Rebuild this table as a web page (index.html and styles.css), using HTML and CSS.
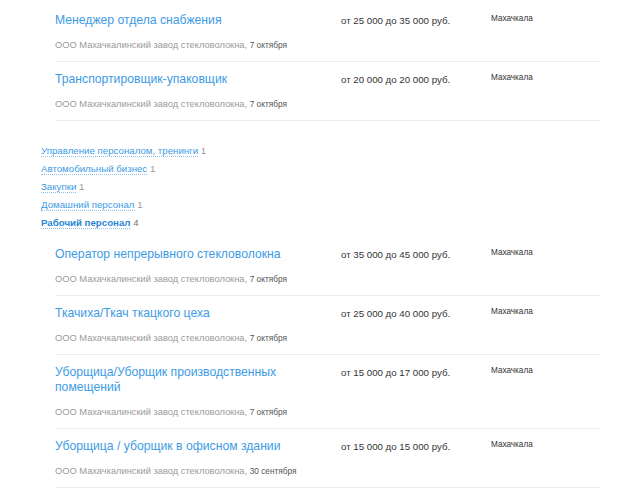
FILE: index.html
```html
<!DOCTYPE html>
<html lang="ru">
<head>
<meta charset="utf-8">
<title>Вакансии</title>
<link rel="stylesheet" href="styles.css">
</head>
<body>
<div class="page">
  <div class="list first">
    <div class="row">
      <div class="main">
        <a class="title" href="#">Менеджер отдела снабжения</a>
        <div class="company">ООО Махачкалинский завод стекловолокна, <span class="date">7 октября</span></div>
      </div>
      <div class="salary">от 25 000 до 35 000 руб.</div>
      <div class="city">Махачкала</div>
    </div>
    <div class="row">
      <div class="main">
        <a class="title" href="#">Транспортировщик-упаковщик</a>
        <div class="company">ООО Махачкалинский завод стекловолокна, <span class="date">7 октября</span></div>
      </div>
      <div class="salary">от 20 000 до 20 000 руб.</div>
      <div class="city">Махачкала</div>
    </div>
  </div>

  <ul class="cats">
    <li><a class="cat" href="#">Управление персоналом, тренинги</a> <span class="count">1</span></li>
    <li><a class="cat" href="#">Автомобильный бизнес</a> <span class="count">1</span></li>
    <li><a class="cat" href="#">Закупки</a> <span class="count">1</span></li>
    <li><a class="cat" href="#">Домашний персонал</a> <span class="count">1</span></li>
    <li><a class="cat active" href="#">Рабочий персонал</a> <span class="count">4</span></li>
  </ul>

  <div class="list">
    <div class="row">
      <div class="main">
        <a class="title" href="#">Оператор непрерывного стекловолокна</a>
        <div class="company">ООО Махачкалинский завод стекловолокна, <span class="date">7 октября</span></div>
      </div>
      <div class="salary">от 35 000 до 45 000 руб.</div>
      <div class="city">Махачкала</div>
    </div>
    <div class="row">
      <div class="main">
        <a class="title" href="#">Ткачиха/Ткач ткацкого цеха</a>
        <div class="company">ООО Махачкалинский завод стекловолокна, <span class="date">7 октября</span></div>
      </div>
      <div class="salary">от 25 000 до 40 000 руб.</div>
      <div class="city">Махачкала</div>
    </div>
    <div class="row">
      <div class="main">
        <a class="title" href="#">Уборщица/Уборщик производственных помещений</a>
        <div class="company">ООО Махачкалинский завод стекловолокна, <span class="date">7 октября</span></div>
      </div>
      <div class="salary">от 15 000 до 17 000 руб.</div>
      <div class="city">Махачкала</div>
    </div>
    <div class="row">
      <div class="main">
        <a class="title" href="#">Уборщица / уборщик в офисном здании</a>
        <div class="company">ООО Махачкалинский завод стекловолокна, <span class="date">30 сентября</span></div>
      </div>
      <div class="salary">от 15 000 до 15 000 руб.</div>
      <div class="city">Махачкала</div>
    </div>
  </div>
</div>
</body>
</html>
```

FILE: styles.css
```css
html, body {
  margin: 0;
  padding: 0;
  background: #fff;
  font-family: "Liberation Sans", Arial, sans-serif;
  color: #333;
}

.page {
  padding-left: 41px;
  width: 559px;
}

.list {
  margin-left: 14px;
}

.list.first {
  padding-top: 3px;
}

.row {
  display: flex;
  align-items: flex-start;
  padding: 10px 0 9px;
  border-bottom: 1px solid #ebebeb;
}

.main {
  width: 286px;
  flex: none;
}

.title {
  display: block;
  font-size: 12.2px;
  line-height: 15px;
  color: #3d9be5;
  text-decoration: none;
  width: 240px;
}

.company {
  margin-top: 10px;
  font-size: 9.3px;
  line-height: 14px;
  color: #9a9a9a;
}

.date {
  font-size: 8.3px;
  color: #555;
}

.salary {
  width: 150px;
  flex: none;
  font-size: 9.7px;
  line-height: 14px;
  margin-top: 1px;
  color: #333;
}

.city {
  flex: 1;
  font-size: 8.2px;
  line-height: 12px;
  color: #333;
}

.cats {
  list-style: none;
  margin: 21px 0 5px;
  padding: 0;
}

.cats li {
  font-size: 9.7px;
  line-height: 18px;
}

.cat {
  color: #3d9be5;
  text-decoration: none;
  border-bottom: 1px dotted #8cc3ee;
}

.cat.active {
  font-weight: bold;
  color: #2a86d4;
}

.count {
  color: #999;
}

.cat.active + .count {
  color: #777;
}
```
